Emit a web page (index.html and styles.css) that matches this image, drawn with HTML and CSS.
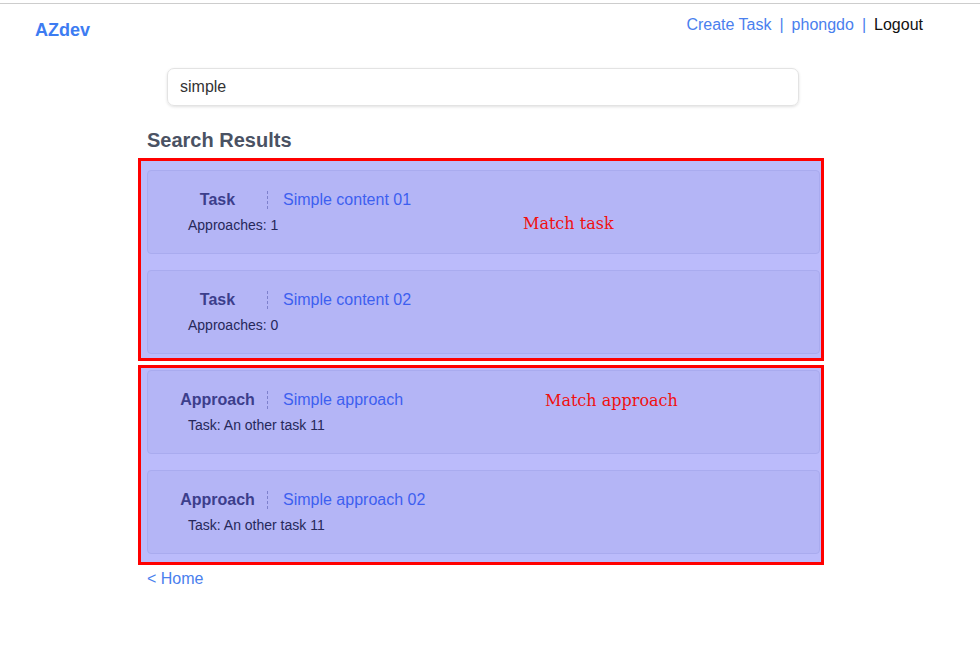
FILE: index.html
```html
<!DOCTYPE html>
<html>
<head>
<meta charset="utf-8">
<link rel="stylesheet" href="styles.css">
</head>
<body>
<div class="topline"></div>
<header class="header">
  <a class="logo">AZdev</a>
  <nav class="nav">
    <a class="nav-link">Create Task</a><span class="sep">|</span><a class="nav-link">phongdo</a><span class="sep">|</span><a class="nav-plain">Logout</a>
  </nav>
</header>
<main class="main">
  <div class="search-box">simple</div>
  <h2 class="title">Search Results</h2>

  <div class="group group-task">
    <span class="note note-task">Match task</span>
    <div class="card">
      <div class="row"><span class="label">Task</span><a class="link">Simple content 01</a></div>
      <div class="meta">Approaches: 1</div>
    </div>
    <div class="card">
      <div class="row"><span class="label">Task</span><a class="link">Simple content 02</a></div>
      <div class="meta">Approaches: 0</div>
    </div>
  </div>

  <div class="group group-approach">
    <span class="note note-approach">Match approach</span>
    <div class="card">
      <div class="row"><span class="label">Approach</span><a class="link">Simple approach</a></div>
      <div class="meta">Task: An other task 11</div>
    </div>
    <div class="card">
      <div class="row"><span class="label">Approach</span><a class="link">Simple approach 02</a></div>
      <div class="meta">Task: An other task 11</div>
    </div>
  </div>

  <a class="home">&lt; Home</a>
</main>
</body>
</html>
```

FILE: styles.css
```css
html, body {
  margin: 0;
  padding: 0;
  background: #ffffff;
  font-family: "Liberation Sans", Arial, sans-serif;
}
.topline {
  height: 3px;
  border-bottom: 1px solid #cdcdcd;
}
.header {
  display: flex;
  justify-content: space-between;
  align-items: flex-start;
  padding: 0 57px 0 35px;
  height: 64px;
}
.logo {
  margin-top: 15px;
  font-size: 18px;
  font-weight: bold;
  line-height: 22px;
  color: #3d7cf2;
}
.nav {
  margin-top: 12px;
  font-size: 16px;
  line-height: 18px;
  display: flex;
}
.nav-link {
  color: #4a80ee;
}
.nav-plain {
  color: #111111;
}
.sep {
  color: #4a80ee;
  margin: 0 8px;
}
.main {
  margin-left: 147px;
  width: 673px;
}
.search-box {
  margin-left: 20px;
  width: 606px;
  height: 36px;
  line-height: 36px;
  padding: 0 12px;
  border: 1px solid #e3e3e3;
  border-radius: 7px;
  box-shadow: 0 1px 3px rgba(0, 0, 0, 0.12);
  font-size: 16px;
  color: #333333;
}
.title {
  margin: 21px 0 0 0;
  height: 31px;
  font-size: 20px;
  line-height: 26px;
  font-weight: bold;
  color: #4a5263;
}
.group {
  position: relative;
  margin-left: -9px;
  width: 673px;
  border: 3px solid #ff0000;
  background: #bbbbfb;
  display: flex;
  flex-direction: column;
  gap: 16px;
}
.group-task {
  padding: 9px 1px 4px 6px;
}
.group-approach {
  margin-top: 4px;
  padding: 2px 1px 8px 6px;
}
.card {
  height: 82px;
  box-sizing: content-box;
  border: 1px solid #a9abef;
  border-radius: 4px;
  background: #b4b5f6;
  padding: 0;
}
.row {
  display: flex;
  align-items: center;
  margin-top: 17px;
  padding-left: 20px;
  height: 24px;
}
.label {
  width: 99px;
  text-align: center;
  font-size: 16px;
  font-weight: bold;
  color: #3c3e8c;
  border-right: 1px dashed #7d80cc;
  line-height: 18px;
}
.link {
  margin-left: 15px;
  font-size: 16px;
  color: #3d5ff0;
}
.meta {
  margin-top: 4px;
  padding-left: 40px;
  font-size: 14px;
  line-height: 18px;
  color: #26285a;
}
.note {
  position: absolute;
  font-family: "DejaVu Serif", "Liberation Serif", serif;
  font-size: 16px;
  color: #f01010;
}
.note-task {
  left: 382px;
  top: 53px;
}
.note-approach {
  left: 404px;
  top: 23px;
}
.home {
  display: block;
  margin-top: 4px;
  font-size: 16px;
  line-height: 20px;
  color: #4a80ee;
}
```
